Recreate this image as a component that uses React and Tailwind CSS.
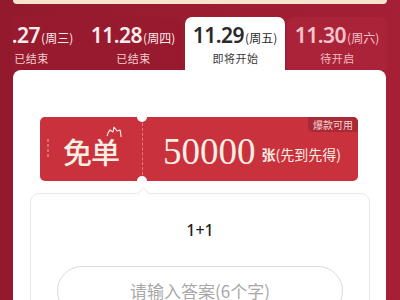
import React from "react";

const cjk = { fontFamily: '"Noto Sans CJK SC", "Noto Sans", sans-serif' };
const serif = { fontFamily: '"Liberation Serif", "Noto Sans CJK SC", serif' };

function Tab({ date, week, status, variant }) {
  const base = "w-[100px] h-[53px] shrink-0 flex flex-col items-center justify-center rounded-t-[7px]";
  const bg =
    variant === "active"
      ? "bg-white"
      : variant === "future"
      ? "bg-[#ab2339]"
      : "bg-[#971a2e]";
  const numColor =
    variant === "active" ? "text-[#2a2a2a]" : variant === "future" ? "text-[#f3c5cb]" : "text-[#fcecec]";
  const subColor =
    variant === "active" ? "text-[#3a3a3a]" : variant === "future" ? "text-[#f0bcc3]" : "text-[#f3cdd0]";
  return (
    <div className={`${base} ${bg}`} style={cjk}>
      <div className={`flex items-baseline leading-none mt-[2px] ${numColor}`}>
        <span className="text-[21px] font-semibold tracking-[-0.5px]" style={{ fontFamily: '"Noto Sans", sans-serif' }}>
          {date}
        </span>
        <span className="text-[12px] ml-[1px]">({week})</span>
      </div>
      <div className={`text-[11px] leading-none mt-[7px] tracking-[0.5px] pl-[1px] ${subColor}`}>{status}</div>
    </div>
  );
}

export default function App() {
  return (
    <div className="w-[400px] h-[300px] overflow-hidden bg-gradient-to-r from-[#921a2c] to-[#a51f35]">
      <div className="mx-[13px] h-[4px] rounded-b-[6px] bg-[#f7e3cf]" />
      <div className="mx-[13px] mt-[13px] overflow-hidden">
        <div className="flex gap-[2px] ml-[-32px]">
          <Tab date="11.27" week="周三" status="已结束" variant="past" />
          <Tab date="11.28" week="周四" status="已结束" variant="past" />
          <Tab date="11.29" week="周五" status="即将开始" variant="active" />
          <Tab date="11.30" week="周六" status="待开启" variant="future" />
        </div>
      </div>
      <div className="ml-[13px] w-[373px] h-[240px] bg-white rounded-t-[8px] pt-[47px]" style={cjk}>
        {/* coupon */}
        <div className="relative ml-[27px] w-[318px] h-[64px] rounded-[5px] bg-[#c9313d] flex overflow-hidden">
          <div className="w-[102px] h-full relative flex items-center justify-center">
            <div className="absolute left-[7px] top-[22px] w-[2px] h-[20px] flex flex-col gap-[2px] opacity-40">
              <div className="h-[3px] bg-[#f2c9c9]" />
              <div className="h-[3px] bg-[#f2c9c9]" />
              <div className="h-[3px] bg-[#f2c9c9]" />
              <div className="h-[3px] bg-[#f2c9c9]" />
            </div>
            <span className="text-[29px] font-medium text-[#fbeee3] leading-none tracking-[-1px] mt-[4px]">免单</span>
            <svg className="absolute left-[66px] top-[9px]" width="16" height="12" viewBox="0 0 16 12" fill="none">
              <path d="M1 10 C2 7 3 5 4 4 L7 6 L8 1 L11 5 L14 4 C14.5 6 15 8 15 11" stroke="#fbeee3" strokeWidth="1.1" strokeLinejoin="round" />
            </svg>
          </div>
          <div className="w-0 h-full border-l border-dashed border-[#e07a80] my-[6px] max-h-[52px]" />
          <div className="flex-1 flex items-center pl-[20px] pt-[4px]">
            <span className="text-[37px] leading-none text-[#fbeee3]" style={serif}>50000</span>
            <span className="text-[14px] text-[#fbeee3] ml-[6px] mt-[6px]">
              <span className="font-bold">张</span>(先到先得)
            </span>
          </div>
          <div className="absolute right-0 top-0 h-[15px] px-[5px] bg-[#a92a35] rounded-bl-[5px] text-[10px] leading-[15px] text-[#f5d3d3]">
            爆款可用
          </div>
          <div className="absolute left-[97px] top-[-5px] w-[10px] h-[10px] rounded-full bg-white" />
          <div className="absolute left-[97px] bottom-[-5px] w-[10px] h-[10px] rounded-full bg-white" />
        </div>
        {/* answer card */}
        <div className="relative ml-[17px] mt-[12px] w-[340px] h-[140px] border border-[#e9e9e9] rounded-[9px] flex flex-col items-center">
          <div className="absolute left-[108px] top-[-5px] w-[9px] h-[9px] rotate-45 bg-white border-l border-t border-[#e9e9e9]" />
          <div className="mt-[28px] text-[16px] font-medium text-[#1f1f1f] leading-none" style={{ fontFamily: '"Noto Sans", sans-serif' }}>
            1+1
          </div>
          <div className="mt-[28px] w-[286px] h-[50px] rounded-full border border-[#dadada] flex items-center justify-center text-[17px] text-[#a8a8a8]">
            请输入答案(6个字)
          </div>
        </div>
      </div>
    </div>
  );
}
